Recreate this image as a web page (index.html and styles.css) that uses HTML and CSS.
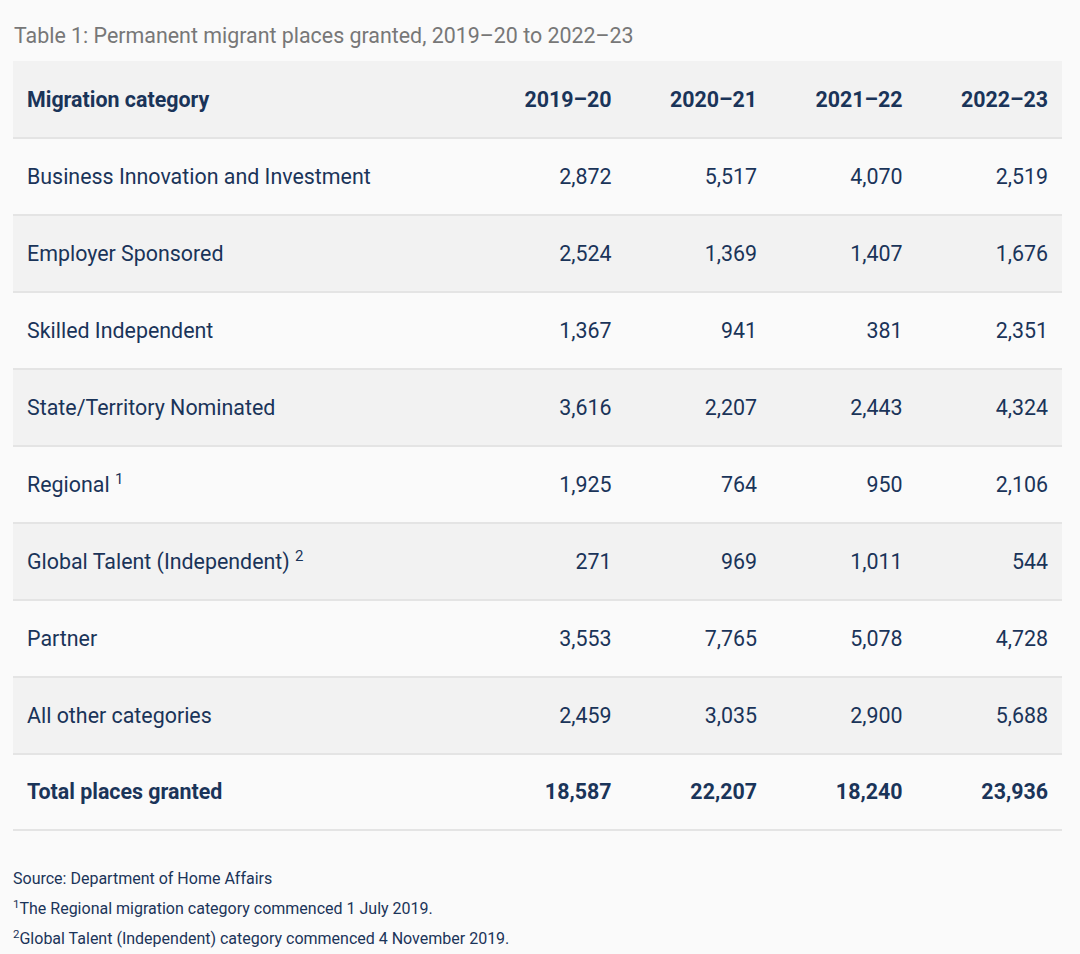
FILE: index.html
```html
<!DOCTYPE html>
<html lang="en">
<head>
<meta charset="utf-8">
<title>Table 1</title>
<link rel="stylesheet" href="styles.css">
</head>
<body>
<div class="page">
  <p class="caption">Table 1: Permanent migrant places granted, 2019–20 to 2022–23</p>
  <table class="data">
    <thead>
      <tr>
        <th class="cat">Migration category</th>
        <th class="num">2019–20</th>
        <th class="num">2020–21</th>
        <th class="num">2021–22</th>
        <th class="num">2022–23</th>
      </tr>
    </thead>
    <tbody>
      <tr><td class="cat">Business Innovation and Investment</td><td class="num">2,872</td><td class="num">5,517</td><td class="num">4,070</td><td class="num">2,519</td></tr>
      <tr><td class="cat">Employer Sponsored</td><td class="num">2,524</td><td class="num">1,369</td><td class="num">1,407</td><td class="num">1,676</td></tr>
      <tr><td class="cat">Skilled Independent</td><td class="num">1,367</td><td class="num">941</td><td class="num">381</td><td class="num">2,351</td></tr>
      <tr><td class="cat">State/Territory Nominated</td><td class="num">3,616</td><td class="num">2,207</td><td class="num">2,443</td><td class="num">4,324</td></tr>
      <tr><td class="cat">Regional <sup>1</sup></td><td class="num">1,925</td><td class="num">764</td><td class="num">950</td><td class="num">2,106</td></tr>
      <tr><td class="cat">Global Talent (Independent) <sup>2</sup></td><td class="num">271</td><td class="num">969</td><td class="num">1,011</td><td class="num">544</td></tr>
      <tr><td class="cat">Partner</td><td class="num">3,553</td><td class="num">7,765</td><td class="num">5,078</td><td class="num">4,728</td></tr>
      <tr><td class="cat">All other categories</td><td class="num">2,459</td><td class="num">3,035</td><td class="num">2,900</td><td class="num">5,688</td></tr>
      <tr class="total"><td class="cat">Total places granted</td><td class="num">18,587</td><td class="num">22,207</td><td class="num">18,240</td><td class="num">23,936</td></tr>
    </tbody>
  </table>
  <div class="notes">
    <p>Source: Department of Home Affairs</p>
    <p><sup>1</sup>The Regional migration category commenced 1 July 2019.</p>
    <p><sup>2</sup>Global Talent (Independent) category commenced 4 November 2019.</p>
  </div>
</div>
</body>
</html>
```
FILE: styles.css
```css
html, body {
  margin: 0;
  padding: 0;
  background: #fafafa;
}
body {
  font-family: Roboto, "Liberation Sans", Arial, sans-serif;
  color: #1a3459;
}
.page {
  padding: 23px 18px 0 13px;
}
.caption {
  margin: 0 0 12px 1px;
  font-size: 21.4px;
  line-height: 26px;
  color: #777777;
}
.data {
  width: 1049px;
  border-collapse: collapse;
  table-layout: fixed;
  font-size: 21.4px;
}
.data th, .data td {
  height: 75px;
  padding: 0 14px;
  border-bottom: 2px solid #e4e4e4;
  vertical-align: middle;
  line-height: 24px;
}
.data th {
  padding-top: 1px;
  font-weight: 700;
  background: #f2f2f2;
}
.data tr:last-child td {
  height: 74px;
}
.data .cat {
  text-align: left;
  width: 439px;
}
.data .num {
  text-align: right;
}
.data tbody tr:nth-child(odd) td {
  background: #fafafa;
}
.data tbody tr:nth-child(even) td {
  background: #f2f2f2;
}
.data tr.total td {
  font-weight: 700;
  background: #fafafa;
}
.data sup {
  font-size: 15px;
  line-height: 0;
  vertical-align: 8px;
}
.notes {
  margin-top: 33px;
  font-size: 16px;
  line-height: 30px;
}
.notes p {
  margin: 0;
}
.notes sup {
  font-size: 11.5px;
  line-height: 0;
  vertical-align: 6px;
}
```
